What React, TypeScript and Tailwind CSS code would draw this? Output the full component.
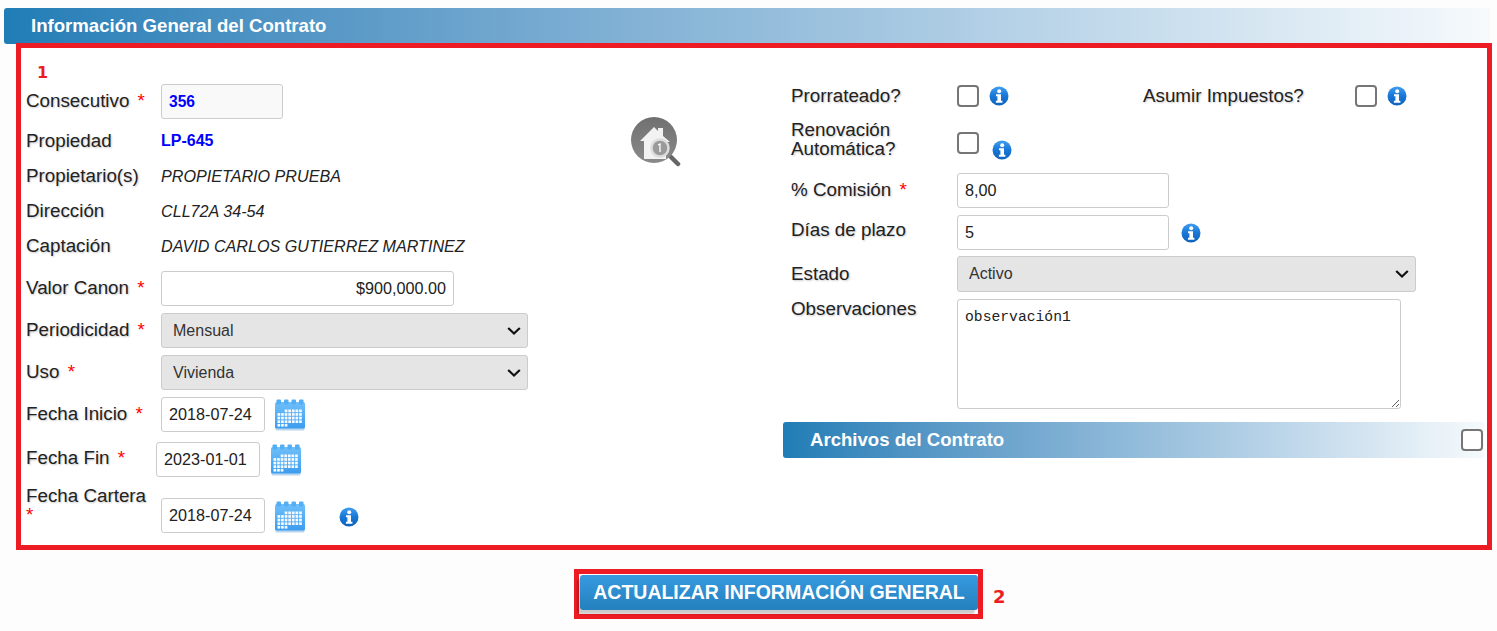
import React from "react";

const labelCls = "text-[18.8px] leading-[19px] text-[#222] [text-shadow:1px_1px_2px_rgba(0,0,0,0.22)]";
const inputCls = "h-[35px] rounded-[3px] border border-[#ccc] bg-white px-[7px] text-[16.2px] text-[#222] outline-none";
const selectCls = "h-full w-full appearance-none rounded-[3px] border border-[#ccc] bg-[#e5e5e5] pl-[11px] text-[16px] text-[#333] outline-none";
const checkCls = "block size-[22px] appearance-none rounded-[4px] border-2 border-[#767676] bg-white";

function Req() {
  return <span className="ml-[3px] text-[#f00] [text-shadow:none]">*</span>;
}

function InfoIcon({ className = "" }: { className?: string }) {
  return (
    <svg viewBox="0 0 20 20" className={`block size-[20px] shrink-0 ${className}`}>
      <defs>
        <linearGradient id="infoGrad" x1="0" y1="0" x2="0" y2="1">
          <stop offset="0" stopColor="#3f9df0" />
          <stop offset="0.5" stopColor="#1877d6" />
          <stop offset="1" stopColor="#0f62bb" />
        </linearGradient>
      </defs>
      <circle cx="10" cy="10" r="9.5" fill="url(#infoGrad)" />
      <circle cx="10.2" cy="5.2" r="2" fill="#fff" />
      <path d="M7 8.2h5v6.6h1.4v2H6.9v-2h1.5v-4.6H7z" fill="#fff" />
    </svg>
  );
}

function SelectBox({ value, className }: { value: string; className: string }) {
  return (
    <div className={`relative ${className}`}>
      <select className={selectCls} defaultValue={value}>
        <option>{value}</option>
      </select>
      <svg viewBox="0 0 14 9" className="pointer-events-none absolute right-[7px] top-1/2 h-[9px] w-[14px] -translate-y-1/2">
        <path d="M1.2 1.5L7 7l5.8-5.5" fill="none" stroke="#111" strokeWidth="2.2" />
      </svg>
    </div>
  );
}

function CalendarIcon() {
  const cells: React.ReactNode[] = [];
  for (let r = 0; r < 5; r++) {
    for (let c = 0; c < 7; c++) {
      if ((r === 0 && c < 2) || (r === 4 && c > 2)) continue;
      cells.push(<rect key={`${r}-${c}`} x={3.5 + c * 3.6} y={10.5 + r * 3.6} width="2.7" height="2.7" fill="#fff" opacity="0.95" />);
    }
  }
  return (
    <svg viewBox="0 0 32 32" className="block h-[32px] w-[32px] shrink-0">
      <defs>
        <linearGradient id="calGrad" x1="0" y1="0" x2="0" y2="1">
          <stop offset="0" stopColor="#6fc0f9" />
          <stop offset="1" stopColor="#3c9bef" />
        </linearGradient>
      </defs>
      <rect x="1" y="3" width="30" height="27" rx="2" fill="url(#calGrad)" />
      <rect x="1.5" y="29.5" width="29" height="2" rx="1" fill="#b9d6ee" />
      {[2.5, 10, 17.5, 25].map((x) => (
        <rect key={x} x={x} y="0.5" width="4.5" height="5" rx="1" fill="#52aef5" />
      ))}
      {cells}
    </svg>
  );
}

function HouseIcon() {
  return (
    <svg viewBox="0 0 50 50" className="block h-[50px] w-[50px]">
      <defs>
        <linearGradient id="houseGrad" x1="0" y1="0" x2="0" y2="1">
          <stop offset="0" stopColor="#707070" />
          <stop offset="1" stopColor="#8a8a8a" />
        </linearGradient>
      </defs>
      <path d="M38 38l9 9" stroke="#666" strokeWidth="4.5" strokeLinecap="round" />
      <circle cx="23" cy="23" r="23" fill="url(#houseGrad)" />
      <path d="M9 24 L23 10 l4 4v-3h5v8l7 6h-4v17H13V24z" fill="#f2f2f2" />
      <circle cx="29" cy="31" r="8.5" fill="#9a9a9a" stroke="#dcdcdc" strokeWidth="2.5" />
      <path d="M27 28l2-1v8" stroke="#fff" strokeWidth="1.3" fill="none" />
    </svg>
  );
}

function Row({ label, children, className = "", labelClass = "" }: { label: React.ReactNode; children: React.ReactNode; className?: string; labelClass?: string }) {
  return (
    <div className={`flex items-center ${className}`}>
      <div className={`w-[135px] shrink-0 ${labelCls} ${labelClass}`}>{label}</div>
      {children}
    </div>
  );
}

export default function App() {
  return (
    <div className="h-[631px] w-[1497px] overflow-hidden bg-[#fdfdfd] font-['Liberation_Sans',Arial,sans-serif]">
      {/* Header */}
      <div className="ml-[4px] mt-[8px] flex h-[36px] w-[1486px] items-center rounded-l-[3px] bg-gradient-to-r from-[#1f7db6] to-[#f6fafc] pb-[1px] pl-[27px] text-[18.6px] font-bold text-white">
        Información General del Contrato
      </div>

      {/* Annotated box 1 */}
      <div className="-mt-px ml-[16px] flex h-[507px] w-[1476px] border-[5px] border-[#ed1c24] bg-white">
        {/* Left column */}
        <div className="flex w-[762px] shrink-0 pl-[5px]">
          <div className="w-[580px] shrink-0">
            <div className="ml-[11px] mt-[17px] h-[19px] font-['DejaVu_Sans',sans-serif] text-[16px] font-bold leading-[16px] text-[#ed1c24]">1</div>
            <Row label={<>Consecutivo <Req /></>} labelClass="mb-[2px]">
              <div className="flex h-[35px] w-[122px] items-center rounded-[3px] border border-[#ccc] bg-[#f9f9f9] px-[7px] text-[15.6px] font-bold text-[#0000ff]">356</div>
            </Row>
            <Row label="Propiedad" className="mt-[4px] h-[35px]">
              <span className="mt-[1px] text-[16px] font-bold text-[#0000ff]">LP-645</span>
            </Row>
            <Row label="Propietario(s)" className="h-[35px]">
              <span className="mt-[1px] text-[16.15px] italic text-[#222]">PROPIETARIO PRUEBA</span>
            </Row>
            <Row label="Dirección" className="h-[35px]">
              <span className="mt-[1px] text-[16.15px] italic text-[#222]">CLL72A 34-54</span>
            </Row>
            <Row label="Captación" className="h-[35px]">
              <span className="mt-[1px] text-[16.15px] italic text-[#222]">DAVID CARLOS GUTIERREZ MARTINEZ</span>
            </Row>
            <Row label={<>Valor Canon <Req /></>} className="mt-[8px]" labelClass="mb-[2px]">
              <input readOnly value="$900,000.00" className={`${inputCls} w-[293px] text-right`} />
            </Row>
            <Row label={<>Periodicidad <Req /></>} className="mt-[7px]" labelClass="mb-[2px]">
              <SelectBox value="Mensual" className="h-[35px] w-[367px]" />
            </Row>
            <Row label={<>Uso <Req /></>} className="mt-[7px]" labelClass="mb-[2px]">
              <SelectBox value="Vivienda" className="h-[35px] w-[367px]" />
            </Row>
            <Row label={<>Fecha Inicio <Req /></>} className="mt-[7px]" labelClass="mb-[2px]">
              <input readOnly value="2018-07-24" className={`${inputCls} w-[104px]`} />
              <div className="ml-[9px]"><CalendarIcon /></div>
            </Row>
            <div className="mt-[10px] flex items-center">
              <div className={`mb-[4px] w-[130px] shrink-0 ${labelCls}`}>Fecha Fin <Req /></div>
              <input readOnly value="2023-01-01" className={`${inputCls} w-[104px]`} />
              <div className="ml-[10px]"><CalendarIcon /></div>
            </div>
            <Row label={<>Fecha Cartera<br /><span className="-ml-[3px]"><Req /></span></>} className="mt-[8px] h-[48px] items-end" labelClass="mt-[1px] self-start">
              <input readOnly value="2018-07-24" className={`${inputCls} w-[104px]`} />
              <div className="ml-[9px]"><CalendarIcon /></div>
              <InfoIcon className="mb-[6px] ml-[33px]" />
            </Row>
          </div>
          <div className="ml-[25px] mt-[69px]"><HouseIcon /></div>
        </div>

        {/* Right column */}
        <div className="min-w-0 flex-1">
          <div className="mt-[37px] flex items-center pl-[8px]">
            <div className={`mb-[2px] w-[166px] shrink-0 ${labelCls}`}>Prorrateado?</div>
            <input type="checkbox" className={checkCls} />
            <InfoIcon className="ml-[10px]" />
            <div className={`mb-[2px] ml-[134px] w-[212px] shrink-0 ${labelCls}`}>Asumir Impuestos?</div>
            <input type="checkbox" className={checkCls} />
            <InfoIcon className="ml-[10px]" />
          </div>
          <div className="mt-[13px] flex items-start pl-[8px]">
            <div className={`w-[166px] shrink-0 ${labelCls}`}>Renovación<br />Automática?</div>
            <input type="checkbox" className={`${checkCls} mt-[12px]`} />
            <InfoIcon className="ml-[13px] mt-[20px]" />
          </div>
          <div className="mt-[13px] flex items-center pl-[8px]">
            <div className={`mb-[2px] w-[166px] shrink-0 ${labelCls}`}>% Comisión <Req /></div>
            <input readOnly value="8,00" className={`${inputCls} w-[212px]`} />
          </div>
          <div className="mt-[7px] flex items-center pl-[8px]">
            <div className={`mb-[6px] w-[166px] shrink-0 ${labelCls}`}>Días de plazo</div>
            <input readOnly value="5" className={`${inputCls} w-[212px]`} />
            <InfoIcon className="ml-[12px] mt-[1px]" />
          </div>
          <div className="mt-[6px] flex items-center pl-[8px]">
            <div className={`mb-[2px] w-[166px] shrink-0 ${labelCls}`}>Estado</div>
            <SelectBox value="Activo" className="h-[36px] w-[459px]" />
          </div>
          <div className="mt-[7px] flex items-start pl-[8px]">
            <div className={`w-[166px] shrink-0 ${labelCls}`}>Observaciones</div>
            <textarea readOnly value="observación1" className="h-[110px] w-[444px] rounded-[3px] border border-[#ccc] bg-white px-[7px] py-[9px] font-['Liberation_Mono',monospace] text-[14.7px] leading-[17px] text-[#222] outline-none" />
          </div>
          <div className="mt-[13px] flex h-[36px] w-[701px] items-center justify-between rounded-l-[3px] bg-gradient-to-r from-[#1f7db6] to-[#f6fafc] pl-[27px] pr-[1px] text-[18.6px] font-bold text-white">
            Archivos del Contrato
            <input type="checkbox" className={checkCls} />
          </div>
        </div>
      </div>

      {/* Annotated box 2 */}
      <div className="ml-[574px] mt-[19px] flex items-center">
        <div className="h-[50px] w-[409px] border-[5px] border-[#ed1c24] bg-white pl-px pt-px">
          <button className="block h-[35px] w-[398px] rounded-[3px] bg-gradient-to-b from-[#369ae0] to-[#2480bd] text-center text-[19.5px] font-bold text-white shadow-[-3px_4px_2px_rgba(0,0,0,0.2)]">
            ACTUALIZAR INFORMACIÓN GENERAL
          </button>
        </div>
        <span className="ml-[10px] mt-[6px] font-['DejaVu_Sans',sans-serif] text-[18px] font-bold leading-[18px] text-[#ed1c24]">2</span>
      </div>
    </div>
  );
}
